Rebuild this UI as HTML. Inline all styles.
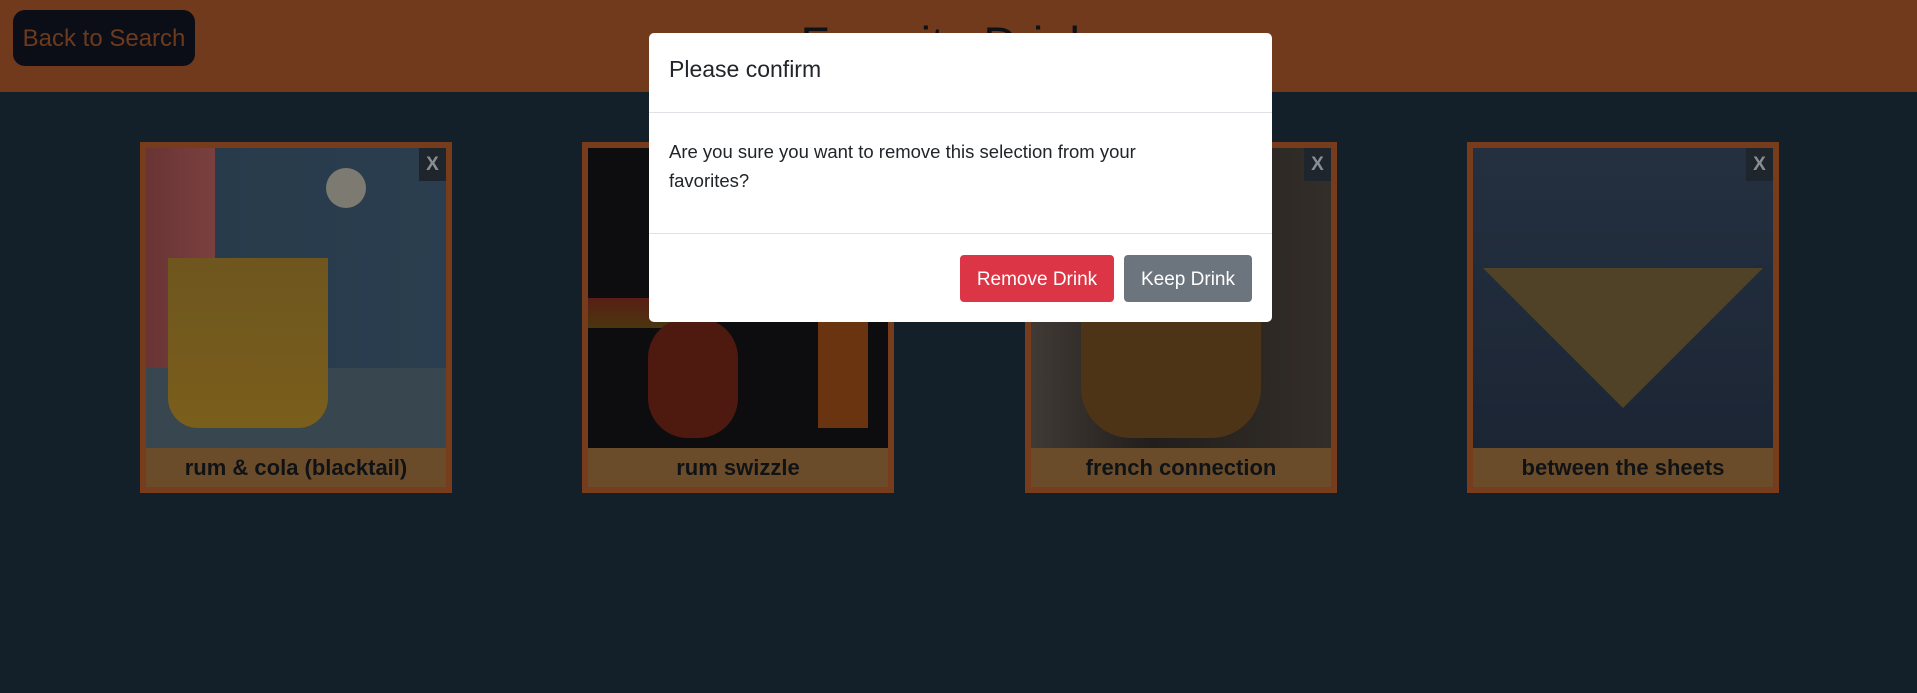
<!DOCTYPE html>
<html><head><meta charset="utf-8"><style>
*{box-sizing:border-box;margin:0;padding:0}
html,body{width:1917px;height:693px;overflow:hidden;background:#131f29;font-family:"Liberation Sans",sans-serif}
.hdr{position:absolute;left:0;top:0;width:1917px;height:92px;background:#713a1d}
.back{position:absolute;left:13px;top:10px;width:182px;height:56px;background:#0b0e17;border-radius:12px;color:#6d3a1d;font-size:24px;line-height:58px;text-align:center}
.title{position:absolute;left:0;width:1917px;top:16px;text-align:center;font-size:47px;color:#0e1116}
.card{position:absolute;top:142px;width:312px;height:351px;background:#763c1c;padding:6px}
.img{width:300px;height:300px;position:relative;overflow:hidden}
.x{position:absolute;right:0;top:0;width:27px;height:33px;background:#1f252d;color:#8a8e93;font-size:19px;font-weight:bold;text-align:center;line-height:33px}
.cap{height:39px;background:#6b4c2a;color:#101316;font-weight:bold;font-size:22px;text-align:center;line-height:39px}
.modal{position:absolute;left:649px;top:33px;width:623px;height:289px;background:#fff;border-radius:5px;font-family:"Liberation Sans",sans-serif;color:#212529}
.mh{height:80px;border-bottom:1px solid #dee2e6;padding:23px 20px 0;font-size:23px}
.mb{height:121px;border-bottom:1px solid #dee2e6;padding:24px 130px 20px 20px;font-size:18.5px;line-height:29px}
.btn{position:absolute;top:222px;height:47px;border-radius:4px;color:#fff;font-size:19px;line-height:50px;text-align:center}
</style></head><body>
<div class="hdr"><div class="back">Back to Search</div><div class="title">Favorite Drinks</div></div>

<div class="card" style="left:140px"><div class="img" style="background:linear-gradient(90deg,#6a3434 0,#7a4040 23%,#283b4b 23%,#2a3e4f 100%)">
<div style="position:absolute;left:0;top:220px;width:300px;height:80px;background:#384650"></div>
<div style="position:absolute;left:22px;top:110px;width:160px;height:170px;background:linear-gradient(#6e561e,#7a5e1c);border-radius:0 0 30px 30px"></div>
<div style="position:absolute;left:180px;top:20px;width:40px;height:40px;border-radius:50%;background:#7d7a72"></div>
<div class="x">X</div></div><div class="cap">rum &amp; cola (blacktail)</div></div>

<div class="card" style="left:582px"><div class="img" style="background:#0d0d0f">
<div style="position:absolute;left:0;top:150px;width:120px;height:30px;background:linear-gradient(#5a1e16,#4a360e)"></div>
<div style="position:absolute;left:60px;top:170px;width:90px;height:120px;border-radius:40px;background:#4e1a10"></div>
<div style="position:absolute;left:230px;top:160px;width:50px;height:120px;background:#6a3410"></div>
<div class="x">X</div></div><div class="cap">rum swizzle</div></div>

<div class="card" style="left:1025px"><div class="img" style="background:linear-gradient(90deg,#403a36,#221e1b 40%,#332e29)">
<div style="position:absolute;left:50px;top:120px;width:180px;height:170px;border-radius:10px 10px 50px 50px;background:#4e3416"></div>
<div class="x">X</div></div><div class="cap">french connection</div></div>

<div class="card" style="left:1467px"><div class="img" style="background:linear-gradient(#243040,#1c2534)">
<div style="position:absolute;left:10px;top:120px;width:0;height:0;border-left:140px solid transparent;border-right:140px solid transparent;border-top:140px solid #504226"></div>
<div class="x">X</div></div><div class="cap">between the sheets</div></div>

<div class="modal">
<div class="mh">Please confirm</div>
<div class="mb">Are you sure you want to remove this selection from your favorites?</div>
<div class="btn" style="left:311px;width:154px;background:#dc3545">Remove Drink</div>
<div class="btn" style="left:475px;width:128px;background:#6c757d">Keep Drink</div>
</div>
</body></html>
